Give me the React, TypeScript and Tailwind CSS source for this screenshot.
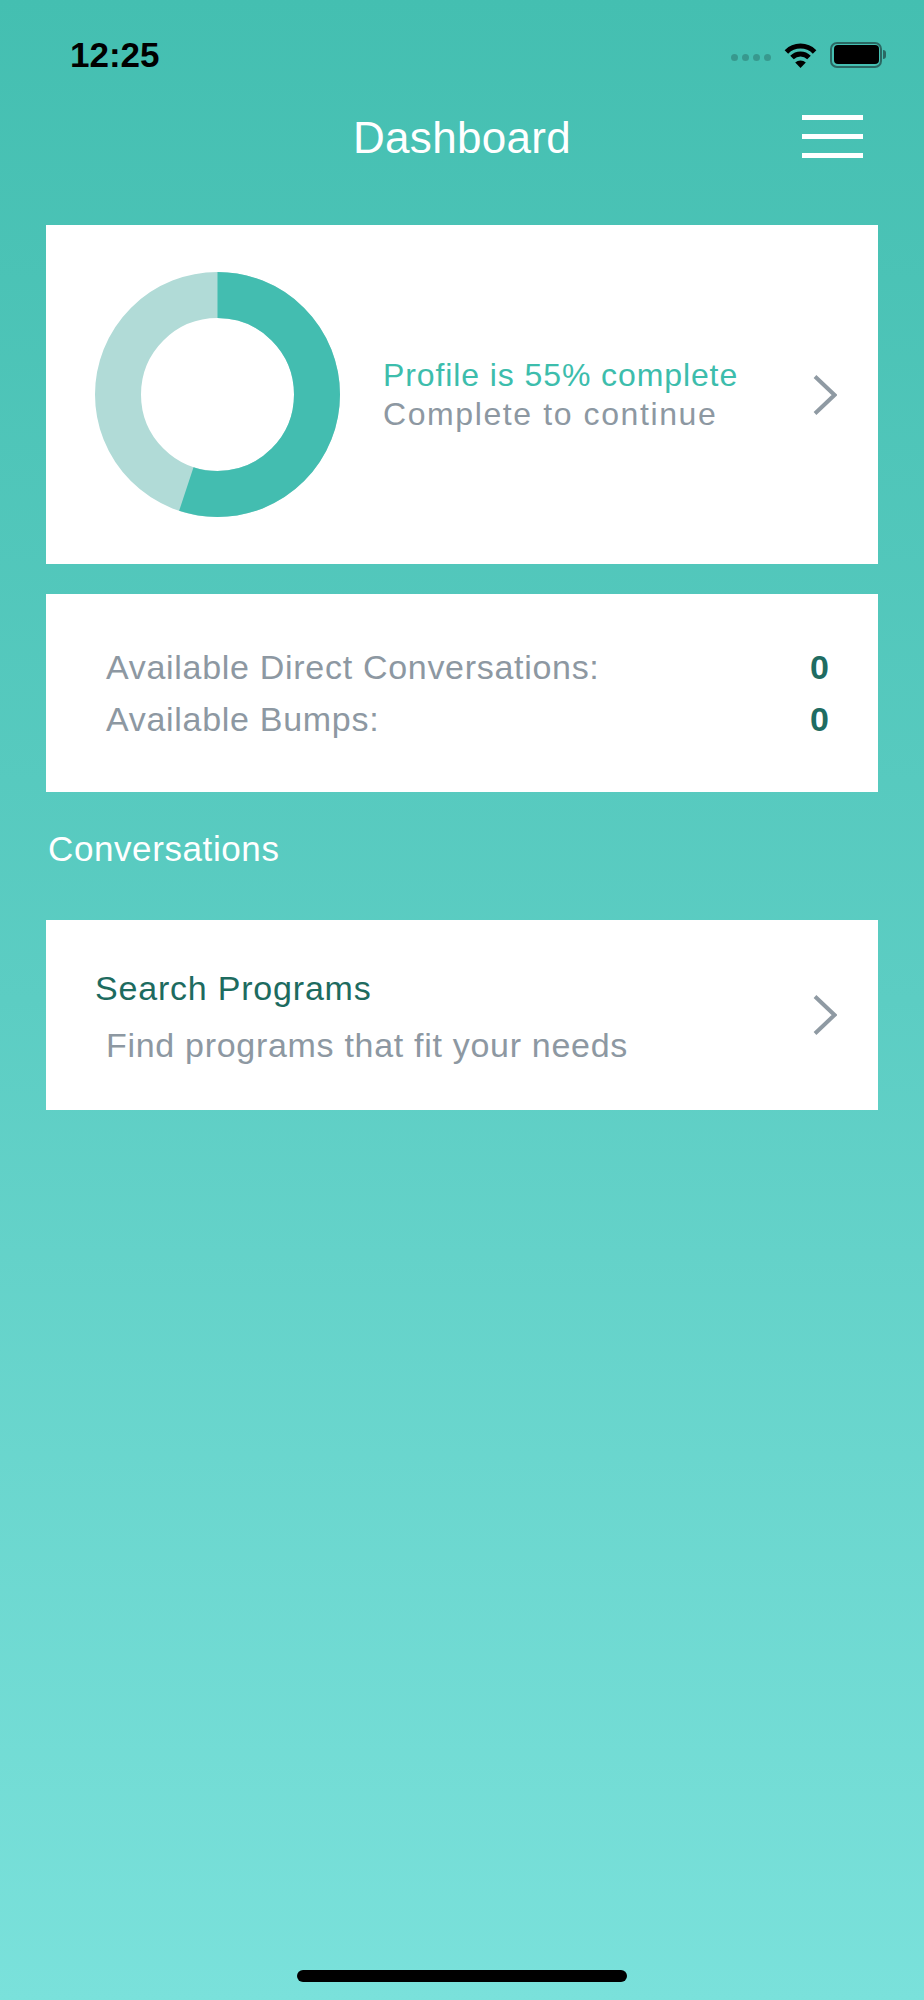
import React from 'react';

const font = { fontFamily: '"Liberation Sans", Arial, sans-serif' };

function Chevron() {
  return (
    <svg width="24" height="40" viewBox="0 0 24 40" fill="none">
      <path d="M2 1.5 L21.5 20 L2 38.5" stroke="#8f9aa3" strokeWidth="4" />
    </svg>
  );
}

function Donut({ percent }: { percent: number }) {
  const r = 99.5;
  const c = 2 * Math.PI * r;
  return (
    <svg width="245" height="245" viewBox="0 0 245 245">
      <circle cx="122.5" cy="122.5" r={r} fill="none" stroke="#b1dbd7" strokeWidth="46" />
      <circle
        cx="122.5"
        cy="122.5"
        r={r}
        fill="none"
        stroke="#43bdb0"
        strokeWidth="46"
        strokeDasharray={`${(c * percent) / 100} ${c}`}
        transform="rotate(-90 122.5 122.5)"
      />
    </svg>
  );
}

function StatusBar() {
  return (
    <div className="flex items-center justify-between h-[35px] mt-[37px] pl-[70px] pr-[38px]">
      <span className="text-[35px] leading-none font-bold text-black">12:25</span>
      <div className="flex items-center">
        <div className="flex gap-[3.5px] mt-[6px]">
          <span className="w-[7.5px] h-[7.5px] rounded-full bg-black/20" />
          <span className="w-[7.5px] h-[7.5px] rounded-full bg-black/20" />
          <span className="w-[7.5px] h-[7.5px] rounded-full bg-black/20" />
          <span className="w-[7.5px] h-[7.5px] rounded-full bg-black/20" />
        </div>
        <svg width="37" height="26" viewBox="0 0 37 26" className="ml-[11px]">
          <path d="M4.4 9.9 A20 20 0 0 1 32.6 9.9" fill="none" stroke="#000" strokeWidth="5" />
          <path d="M10 15.5 A12 12 0 0 1 27 15.5" fill="none" stroke="#000" strokeWidth="5" />
          <path d="M18.5 26 L13.2 20.6 A7.5 7.5 0 0 1 23.8 20.6 Z" fill="#000" />
        </svg>
        <div className="flex items-center ml-[11px]">
          <div className="w-[52px] h-[26px] rounded-[7px] border-[2.5px] border-[#2b6863] p-[1.5px]">
            <div className="w-full h-full rounded-[4px] bg-black" />
          </div>
          <div className="w-[3px] h-[9px] rounded-r-full bg-[#2b6863] ml-[1px]" />
        </div>
      </div>
    </div>
  );
}

export default function App() {
  return (
    <div
      className="min-h-[2000px] w-full flex flex-col bg-gradient-to-b from-[#44bfb1] via-[#5ccdc3] to-[#7ae1db]"
      style={font}
    >
      <StatusBar />

      {/* Header */}
      <div className="grid grid-cols-[1fr_auto_1fr] items-center mt-[44px] h-[44px]">
        <div />
        <h1 className="text-[44px] leading-none text-white tracking-[0.3px]">Dashboard</h1>
        <div className="flex justify-end pr-[61px]">
          <button className="flex flex-col gap-[14px] -mt-[4px]">
            <span className="block w-[61px] h-[5px] bg-white" />
            <span className="block w-[61px] h-[5px] bg-white" />
            <span className="block w-[61px] h-[5px] bg-white" />
          </button>
        </div>
      </div>

      <main className="px-[46px] mt-[65px] flex flex-col">
        {/* Profile completion */}
        <div className="bg-white h-[339px] flex items-center">
          <div className="ml-[49px]">
            <Donut percent={55} />
          </div>
          <div className="flex-1 ml-[43px] text-[32px] leading-[39px]">
            <div className="text-[#3dbdac] tracking-[0.9px]">Profile is 55% complete</div>
            <div className="text-[#8d98a2] tracking-[1.6px]">Complete to continue</div>
          </div>
          <div className="mr-[41px]">
            <Chevron />
          </div>
        </div>

        {/* Availability */}
        <div className="bg-white h-[198px] mt-[30px] flex flex-col justify-center pl-[60px] pr-[49px] text-[34px] leading-[52px] tracking-[0.7px]">
          <div className="flex justify-between">
            <span className="text-[#8d98a2]">Available Direct Conversations:</span>
            <span className="font-bold text-[#1f6c62] tracking-normal">0</span>
          </div>
          <div className="flex justify-between">
            <span className="text-[#8d98a2]">Available Bumps:</span>
            <span className="font-bold text-[#1f6c62] tracking-normal">0</span>
          </div>
        </div>

        <h2 className="text-[35px] leading-none text-white mt-[39px] ml-[2px] tracking-[0.6px]">Conversations</h2>

        {/* Search programs */}
        <div className="bg-white h-[190px] mt-[54px] flex items-center">
          <div className="flex-1 flex flex-col gap-[23px] pl-[49px] text-[34px] leading-none tracking-[0.8px] mt-[3px]">
            <div className="text-[#1d6b5f]">Search Programs</div>
            <div className="text-[#8d98a2] ml-[11px] tracking-[0.7px]">Find programs that fit your needs</div>
          </div>
          <div className="mr-[41px]">
            <Chevron />
          </div>
        </div>
      </main>

      <div className="flex-1" />
      <div className="mx-auto mb-[18px] w-[330px] h-[12px] rounded-full bg-black" />
    </div>
  );
}
